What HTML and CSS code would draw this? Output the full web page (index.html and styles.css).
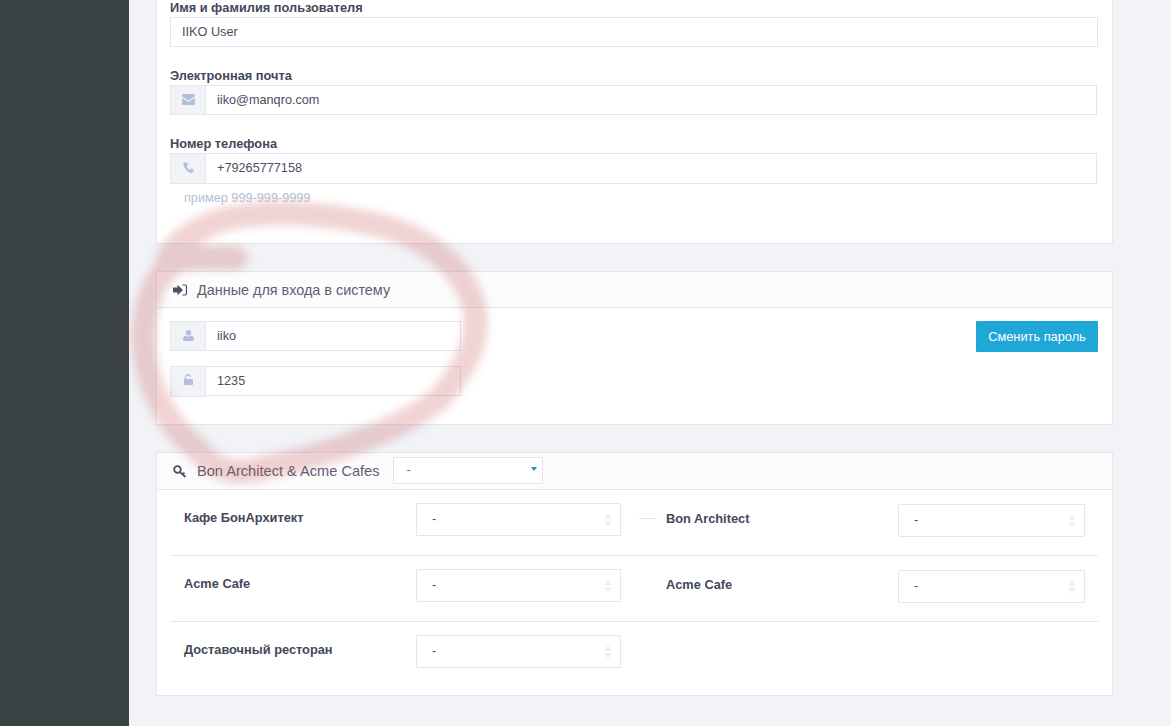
FILE: index.html
```html
<!DOCTYPE html>
<html lang="ru">
<head>
<meta charset="utf-8">
<title>Профиль</title>
<link rel="stylesheet" href="styles.css">
</head>
<body>
<aside class="sidebar"></aside>
<main class="main">
  <section class="panel panel-top">
    <div class="field">
      <div class="label">Имя и фамилия пользователя</div>
      <div class="control plain">IIKO User</div>
    </div>
    <div class="field">
      <div class="label">Электронная почта</div>
      <div class="group group-wide">
        <span class="addon"><svg class="ico" viewBox="0 0 14 12"><path d="M0 2.600V1.200C0 .5.500 0 1.200 0h11.600c.7 0 1.200.5 1.200 1.200v1.400L7 7.200zM0 4.200l7 4.600 7-4.600v6.600c0 .7-.5 1.200-1.200 1.200H1.200C.5 12 0 11.500 0 10.800z"/></svg></span>
        <span class="control">iiko@manqro.com</span>
      </div>
    </div>
    <div class="field">
      <div class="label">Номер телефона</div>
      <div class="group group-wide group-tall">
        <span class="addon"><svg class="ico ico-phone" viewBox="0 0 12 12"><path d="M2.600.3 1 1.200C.3 1.700.2 2.600.5 3.600c.9 3 4.200 7 7.300 8.100 1.100.4 2.100.2 2.700-.4l1.200-1.500c.3-.4.200-.8-.2-1.100L9.700 7.300c-.4-.2-.8-.2-1.100.1l-.8.9c-.3.300-.7.300-1 .1C5.700 7.500 4.500 6 4 4.800c-.1-.4 0-.7.300-.9l.8-.6c.4-.3.500-.7.300-1.100L3.600.6C3.300.2 3 .1 2.600.3z"/></svg></span>
        <span class="control">+79265777158</span>
      </div>
      <div class="help">пример 999-999-9999</div>
    </div>
  </section>

  <section class="panel">
    <header class="panel-head">
      <svg class="head-ico" viewBox="0 0 14 12"><path d="M0 3.500h4.500V.8L10 6l-5.500 5.200V8.500H0z"/><path d="M9.500 1h2.300c1 0 1.700.7 1.700 1.500v7c0 .8-.7 1.500-1.700 1.500H9.500" fill="none" stroke="currentColor" stroke-width="1.200"/></svg>
      <span class="head-title">Данные для входа в систему</span>
    </header>
    <div class="login-body">
      <div class="login-fields">
        <div class="group">
          <span class="addon"><svg class="ico ico-user" viewBox="0 0 12 12"><circle cx="6" cy="3" r="3"/><path d="M0 10.500C0 8 1 6.400 3 6.200c.8.600 1.900 1 3 1s2.200-.4 3-1c2 .2 3 1.800 3 4.300 0 1-.7 1.500-1.500 1.500h-9C.7 12 0 11.500 0 10.500z"/></svg></span>
          <span class="control">iiko</span>
        </div>
        <div class="group group-second">
          <span class="addon"><svg class="ico ico-lock" viewBox="0 0 10 12"><path d="M1 5.500V3.300C1 1.400 2.500 0 4.300 0s3.200 1.400 3.200 3.300H6C6 2.300 5.300 1.500 4.300 1.500S2.500 2.300 2.500 3.300v2.200h6.700c.4 0 .8.300.8.800v4.900c0 .5-.4.800-.8.800H.8c-.4 0-.8-.3-.8-.8V6.300c0-.5.400-.8 1-.8z"/></svg></span>
          <span class="control">1235</span>
        </div>
      </div>
      <button class="btn" type="button">Сменить пароль</button>
    </div>
  </section>

  <section class="panel">
    <header class="panel-head panel-head-select">
      <svg class="head-ico key-ico" viewBox="0 0 14 13"><circle cx="4.500" cy="4.500" r="3.300" fill="none" stroke="currentColor" stroke-width="1.800"/><path d="M7 7l5.500 5M9.500 9.200l2-1.500" fill="none" stroke="currentColor" stroke-width="1.700"/></svg>
      <span class="head-title head-title-wide">Bon Architect &amp; Acme Cafes</span>
      <span class="head-select">-<i class="caret"></i></span>
    </header>
    <div class="rows">
      <div class="row">
        <div class="col">
          <div class="row-label">Кафе БонАрхитект</div>
          <div class="select">-<svg class="sort" viewBox="0 0 8 14"><path d="M4 0l3.500 6h-7zM4 14L.5 8h7z"/></svg></div>
        </div>
        <div class="col col-right">
          <i class="dash"></i>
          <div class="row-label row-label-right">Bon Architect</div>
          <div class="select select-right">-<svg class="sort" viewBox="0 0 8 14"><path d="M4 0l3.500 6h-7zM4 14L.5 8h7z"/></svg></div>
        </div>
      </div>
      <div class="row">
        <div class="col">
          <div class="row-label">Acme Cafe</div>
          <div class="select">-<svg class="sort" viewBox="0 0 8 14"><path d="M4 0l3.500 6h-7zM4 14L.5 8h7z"/></svg></div>
        </div>
        <div class="col col-right">
          <i class="dash dash-hidden"></i>
          <div class="row-label row-label-right">Acme Cafe</div>
          <div class="select select-right">-<svg class="sort" viewBox="0 0 8 14"><path d="M4 0l3.500 6h-7zM4 14L.5 8h7z"/></svg></div>
        </div>
      </div>
      <div class="row row-last">
        <div class="col">
          <div class="row-label">Доставочный ресторан</div>
          <div class="select">-<svg class="sort" viewBox="0 0 8 14"><path d="M4 0l3.500 6h-7zM4 14L.5 8h7z"/></svg></div>
        </div>
      </div>
    </div>
  </section>
</main>
<svg class="scribble" viewBox="0 0 1171 726" aria-hidden="true">
  <path d="M236 258C215 258 195 257 180 259C160 268 147 295 144 325C140 370 160 420 200 452C215 472 240 476 270 466C330 455 400 430 440 398C468 365 479 340 475 310C467 275 440 245 390 228C330 212 260 208 215 222C190 232 175 245 168 258"/>
</svg>
</body>
</html>
```
FILE: styles.css
```css
html, body {
  margin: 0;
  height: 726px;
  overflow: hidden;
}
body {
  display: flex;
  position: relative;
  background: #f1f3f7;
  font-family: "Liberation Sans", Arial, sans-serif;
  font-size: 12.7px;
  color: #4a4e60;
}
.sidebar {
  flex: 0 0 129px;
  background: #3a4244;
}
.main {
  flex: 1;
  min-width: 0;
  padding: 0 58px 0 27px;
}
.panel {
  background: #fff;
  border: 1px solid #e3e6ee;
  margin-bottom: 27px;
}
.panel-top {
  border-top: 0;
  height: 243px;
  padding: 0 14px 0 13px;
  box-sizing: content-box;
}
.field {
  margin-bottom: 21px;
}
.label {
  height: 17px;
  line-height: 15px;
  font-size: 12.8px;
  font-weight: 700;
  color: #444859;
}
.control {
  flex: 1;
  display: block;
  box-sizing: border-box;
  height: 30px;
  line-height: 28px;
  padding: 0 11px;
  background: #fff;
  border: 1px solid #e3e6ee;
  border-left-width: 0;
}
.plain {
  border-left-width: 1px;
  padding-left: 11px;
}
.group {
  display: flex;
  height: 30px;
}
.group-wide {
  margin-right: 1px;
}
.group-tall,
.group-tall .control {
  height: 31px;
  line-height: 29px;
}
.group-second {
  margin-top: 15px;
}
.addon {
  flex: 0 0 36px;
  box-sizing: border-box;
  display: flex;
  justify-content: center;
  padding-top: 8px;
  height: 100%;
  background: #f1f3f7;
  border: 1px solid #e3e6ee;
  border-right-width: 1px;
}
.group-second .addon {
  height: 31px;
  padding-top: 7px;
}
.ico {
  width: 13px;
  height: 11px;
  fill: #b2bedb;
}
.ico-phone {
  width: 11px;
  height: 11px;
}
.ico-user {
  width: 11px;
  height: 11px;
}
.ico-lock {
  width: 9px;
  height: 11px;
}
.help {
  margin: 7px 0 0 14px;
  line-height: 14px;
  color: #b4bfd8;
}
.panel-head {
  display: flex;
  align-items: center;
  box-sizing: border-box;
  height: 36px;
  padding-left: 16px;
  background: #fcfcfd;
  border-bottom: 1px solid #e3e6ee;
}
.panel-head-select {
  height: 37px;
}
.head-ico {
  flex: 0 0 14px;
  width: 14px;
  height: 12px;
  margin-right: 10px;
  color: #4c4f60;
  fill: currentColor;
}
.key-ico {
  fill: none;
  height: 13px;
}
.head-title {
  font-size: 14.4px;
  color: #5c6074;
}
.head-title-wide {
  font-size: 14.6px;
}
.head-select {
  position: relative;
  box-sizing: border-box;
  width: 150px;
  height: 27px;
  line-height: 25px;
  margin: 0 0 2px 13px;
  padding-left: 13px;
  background: #fff;
  border: 1px solid #e3e6ee;
  border-radius: 1px;
  color: #1a93c0;
}
.caret {
  position: absolute;
  right: 5px;
  top: 9px;
  border-left: 3px solid transparent;
  border-right: 3px solid transparent;
  border-top: 4px solid #1a93c0;
}
.login-body {
  display: flex;
  justify-content: space-between;
  align-items: flex-start;
  height: 116px;
  box-sizing: border-box;
  padding: 13px 14px 0 13px;
}
.login-fields {
  width: 291px;
}
.btn {
  width: 122px;
  height: 31px;
  padding: 0;
  border: 0;
  border-radius: 1px;
  background: #1fa7d8;
  color: #fff;
  font: 12.8px "Liberation Sans", Arial, sans-serif;
}
.rows {
  padding: 0 14px 0 13px;
}
.row {
  display: flex;
  height: 66px;
  box-sizing: border-box;
  padding-top: 13px;
  border-bottom: 1px solid #e3e6ee;
}
.row-last {
  height: 73px;
  border-bottom: 0;
}
.col {
  display: flex;
  flex: 0 0 469px;
  align-items: flex-start;
}
.col-right {
  flex: 1;
}
.row-label {
  flex: 0 0 246px;
  box-sizing: border-box;
  padding: 8px 0 0 14px;
  line-height: 14px;
  font-size: 12.8px;
  font-weight: 700;
  color: #444859;
}
.row-label-right {
  flex-basis: 232px;
  padding-left: 0;
  padding-top: 9px;
}
.dash {
  flex: 0 0 18px;
  height: 1px;
  margin: 15px 9px 0 0;
  background: #e3e6ee;
}
.dash-hidden {
  background: transparent;
}
.select {
  position: relative;
  box-sizing: border-box;
  width: 205px;
  height: 33px;
  line-height: 31px;
  padding-left: 15px;
  border: 1px solid #e3e6ee;
  border-radius: 1px;
}
.select-right {
  width: 187px;
  margin-top: 1px;
}
.sort {
  position: absolute;
  right: 8px;
  top: 9px;
  width: 8px;
  height: 14px;
  fill: #edf0f6;
}
.scribble {
  position: absolute;
  left: 0;
  top: 0;
  width: 1171px;
  height: 726px;
  pointer-events: none;
  filter: blur(4px);
}
.scribble path {
  fill: none;
  stroke: rgba(196, 70, 70, 0.24);
  stroke-width: 24;
  stroke-linecap: round;
  stroke-linejoin: round;
}
```
